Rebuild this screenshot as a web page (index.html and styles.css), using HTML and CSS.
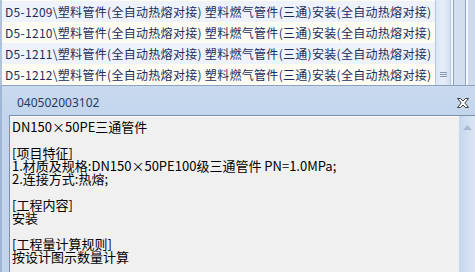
FILE: index.html
```html
<!DOCTYPE html>
<html lang="zh-CN">
<head>
    <meta charset="UTF-8" />
    <title>清单项目</title>
    <link rel="stylesheet" href="styles.css">
</head>
<body>
    <div class="app">
        <div class="list-pane">
            <div class="list">
                <div class="row row-odd">D5-1209\塑料管件(全自动热熔对接) 塑料燃气管件(三通)安装(全自动热熔对接)</div>
                <div class="row row-even">D5-1210\塑料管件(全自动热熔对接) 塑料燃气管件(三通)安装(全自动热熔对接)</div>
                <div class="row row-odd">D5-1211\塑料管件(全自动热熔对接) 塑料燃气管件(三通)安装(全自动热熔对接)</div>
                <div class="row row-even">D5-1212\塑料管件(全自动热熔对接) 塑料燃气管件(三通)安装(全自动热熔对接)</div>
            </div>
            <div class="list-scroll">
                <div class="grip"><span></span><span></span><span></span></div>
            </div>
            <div class="splitter"></div>
        </div>
        <div class="detail">
            <div class="detail-head">
                <span class="code">040502003102</span>
                <svg class="close" width="12" height="10" viewBox="0 0 12 10">
                    <polygon points="0.5,0.5 3.5,0.5 6,3 8.5,0.5 11.5,0.5 7.8,5 11.5,9.5 8.5,9.5 6,7 3.5,9.5 0.5,9.5 4.2,5" fill="#fff" stroke="#3c3c3c" stroke-width="1" stroke-linejoin="miter"/>
                </svg>
            </div>
            <div class="memo-wrap">
                <div class="memo">DN150×50PE三通管件

[项目特征]
1.材质及规格:DN150×50PE100级三通管件 PN=1.0MPa;
2.连接方式:热熔;

[工程内容]
安装

[工程量计算规则]
按设计图示数量计算</div>
                <div class="memo-scroll">
                    <svg class="arrow-up" width="9" height="5" viewBox="0 0 9 5">
                        <polygon points="0,5 4.5,0 9,5" fill="#a9bad0"/>
                    </svg>
                </div>
            </div>
        </div>
    </div>
</body>
</html>
```

FILE: styles.css
```css
body {
    margin: 0; padding: 0;
    background: #c5d7ee;
    font-family: "Noto Sans CJK SC", "Noto Sans", sans-serif;
}
.app {
    width: 475px; height: 272px;
    display: flex; flex-direction: column;
    overflow: hidden;
}

/* top list */
.list-pane {
    height: 85px;
    display: flex;
    border-bottom: 1px solid #8ea3c2;
    border-left: 2px solid #b2c2d8;
}
.list {
    flex: 1;
    min-width: 0;
    padding-top: 1px;
    overflow: hidden;
    background: #fcfcf3;
}
.row {
    height: 21px; line-height: 21px;
    padding-left: 3px;
    font-size: 12px;
    letter-spacing: 0.3px;
    color: #1c2d5c;
    white-space: nowrap;
    overflow: hidden;
}
.row-odd { background: #edf2fb; }
.row-even { background: #fcfcf2; }

.list-scroll {
    width: 14px;
    background: linear-gradient(to right, #dbe6f4, #e6eef8 50%, #d3e0f0);
    border-left: 1px solid #b7c8de;
    border-right: 1px solid #b7c8de;
    display: flex; flex-direction: column; justify-content: flex-end;
    align-items: center;
    padding-bottom: 8px;
}
.grip {
    display: flex; flex-direction: column; gap: 1px;
}
.grip span {
    display: block;
    width: 7px; height: 1px;
    background: #8899b5;
}
.splitter {
    width: 24px;
    background: linear-gradient(to right,
        #f3f6fb 0, #f3f6fb 2px,
        #8fa4c4 2px, #8fa4c4 3px,
        #d3dfee 3px, #d3dfee 14px,
        #8fa4c4 14px, #8fa4c4 15px,
        #f6f8fc 15px, #f6f8fc 17px,
        #cfdbeb 17px);
}

/* detail panel */
.detail {
    flex: 1;
    display: flex; flex-direction: column;
    border-left: 2px solid #a0b6d5;
    background: linear-gradient(#c9daef, #c2d5ec 30px);
    min-height: 0;
}
.detail-head {
    height: 25px;
    padding: 4px 6px 0 15px;
    display: flex; align-items: center; justify-content: space-between;
}
.code {
    font-family: "Noto Sans", sans-serif;
    font-size: 12px;
    color: #1f3b62;
}
.memo-wrap {
    flex: 1;
    margin-left: 7px;
    display: flex;
    border-top: 1px solid #7d8fa9;
    border-left: 1px solid #7d8fa9;
    min-height: 0;
}
.memo {
    flex: 1;
    background: #f0f0f0;
    box-shadow: inset 0 1px 0 #fbfbfb;
    padding: 4px 0 0 2px;
    font-size: 13px;
    line-height: 13px;
    color: #000;
    white-space: pre;
    overflow: hidden;
}
.memo-scroll {
    width: 16px;
    background: linear-gradient(to right, #c5d6ed, #dde7f4);
    display: flex; justify-content: center;
    padding-top: 9px;
}
.arrow-up { display: block; }
```
